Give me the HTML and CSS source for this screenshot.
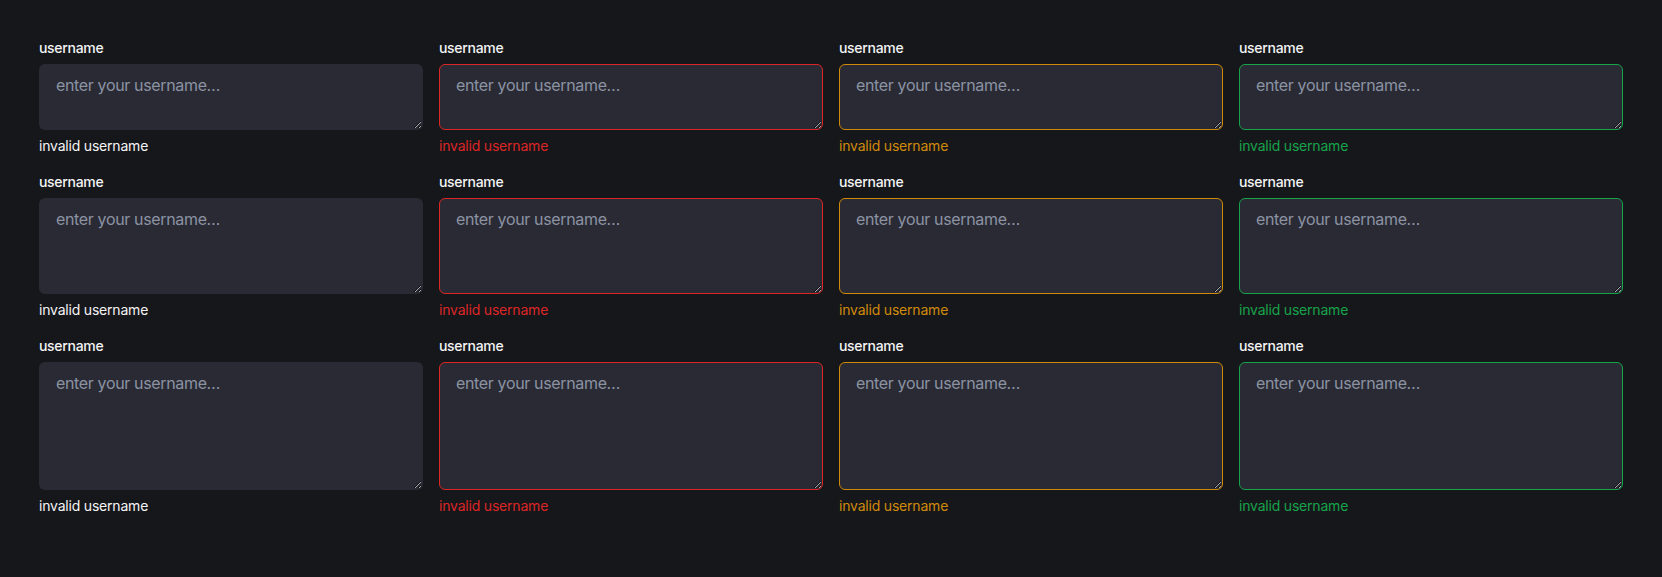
FILE: index.html
```html
<!DOCTYPE html>
<html lang="en">
<head>
<meta charset="utf-8">
<title>Textarea states</title>
<link rel="stylesheet" href="styles.css">
</head>
<body>
<main class="grid">
  <div class="field"><label class="label">username</label><textarea class="input h-sm" placeholder="enter your username…"></textarea><p class="msg">invalid username</p></div>
  <div class="field"><label class="label">username</label><textarea class="input h-sm danger" placeholder="enter your username…"></textarea><p class="msg danger-text">invalid username</p></div>
  <div class="field"><label class="label">username</label><textarea class="input h-sm warning" placeholder="enter your username…"></textarea><p class="msg warning-text">invalid username</p></div>
  <div class="field"><label class="label">username</label><textarea class="input h-sm success" placeholder="enter your username…"></textarea><p class="msg success-text">invalid username</p></div>

  <div class="field"><label class="label">username</label><textarea class="input h-md" placeholder="enter your username…"></textarea><p class="msg">invalid username</p></div>
  <div class="field"><label class="label">username</label><textarea class="input h-md danger" placeholder="enter your username…"></textarea><p class="msg danger-text">invalid username</p></div>
  <div class="field"><label class="label">username</label><textarea class="input h-md warning" placeholder="enter your username…"></textarea><p class="msg warning-text">invalid username</p></div>
  <div class="field"><label class="label">username</label><textarea class="input h-md success" placeholder="enter your username…"></textarea><p class="msg success-text">invalid username</p></div>

  <div class="field"><label class="label">username</label><textarea class="input h-lg" placeholder="enter your username…"></textarea><p class="msg">invalid username</p></div>
  <div class="field"><label class="label">username</label><textarea class="input h-lg danger" placeholder="enter your username…"></textarea><p class="msg danger-text">invalid username</p></div>
  <div class="field"><label class="label">username</label><textarea class="input h-lg warning" placeholder="enter your username…"></textarea><p class="msg warning-text">invalid username</p></div>
  <div class="field"><label class="label">username</label><textarea class="input h-lg success" placeholder="enter your username…"></textarea><p class="msg success-text">invalid username</p></div>
</main>
</body>
</html>
```

FILE: styles.css
```css
* { box-sizing: border-box; }
html, body {
  margin: 0;
  background: #16171b;
}
body {
  font-family: Inter, "Noto Sans", sans-serif;
  color: #f4f4f5;
  padding: 38px 39px;
}
.grid {
  display: grid;
  grid-template-columns: repeat(4, 1fr);
  column-gap: 16px;
  row-gap: 16px;
}
.field {
  display: flex;
  flex-direction: column;
  gap: 6px;
}
.label {
  font-size: 14px;
  line-height: 20px;
  font-weight: 500;
  letter-spacing: -0.3px;
  color: #f4f4f5;
}
.input {
  display: block;
  width: 100%;
  margin: 0;
  background: #2a2a34;
  border: 1px solid transparent;
  border-radius: 6px;
  padding: 8px 16px;
  font-family: Inter, "Noto Sans", sans-serif;
  font-size: 16px;
  line-height: 24px;
  letter-spacing: -0.35px;
  color: #e5e7eb;
  outline: none;
}
.input::placeholder { color: #8b93a3; }
.h-sm { height: 66px; }
.h-md { height: 96px; }
.h-lg { height: 128px; }
.danger { border-color: #dc2626; }
.warning { border-color: #d08a0a; }
.success { border-color: #16a34a; }
.msg {
  margin: 0;
  font-size: 14px;
  line-height: 20px;
  letter-spacing: -0.2px;
  color: #f4f4f5;
}
.danger-text { color: #dc2626; }
.warning-text { color: #d08a0a; }
.success-text { color: #16a34a; }
```
